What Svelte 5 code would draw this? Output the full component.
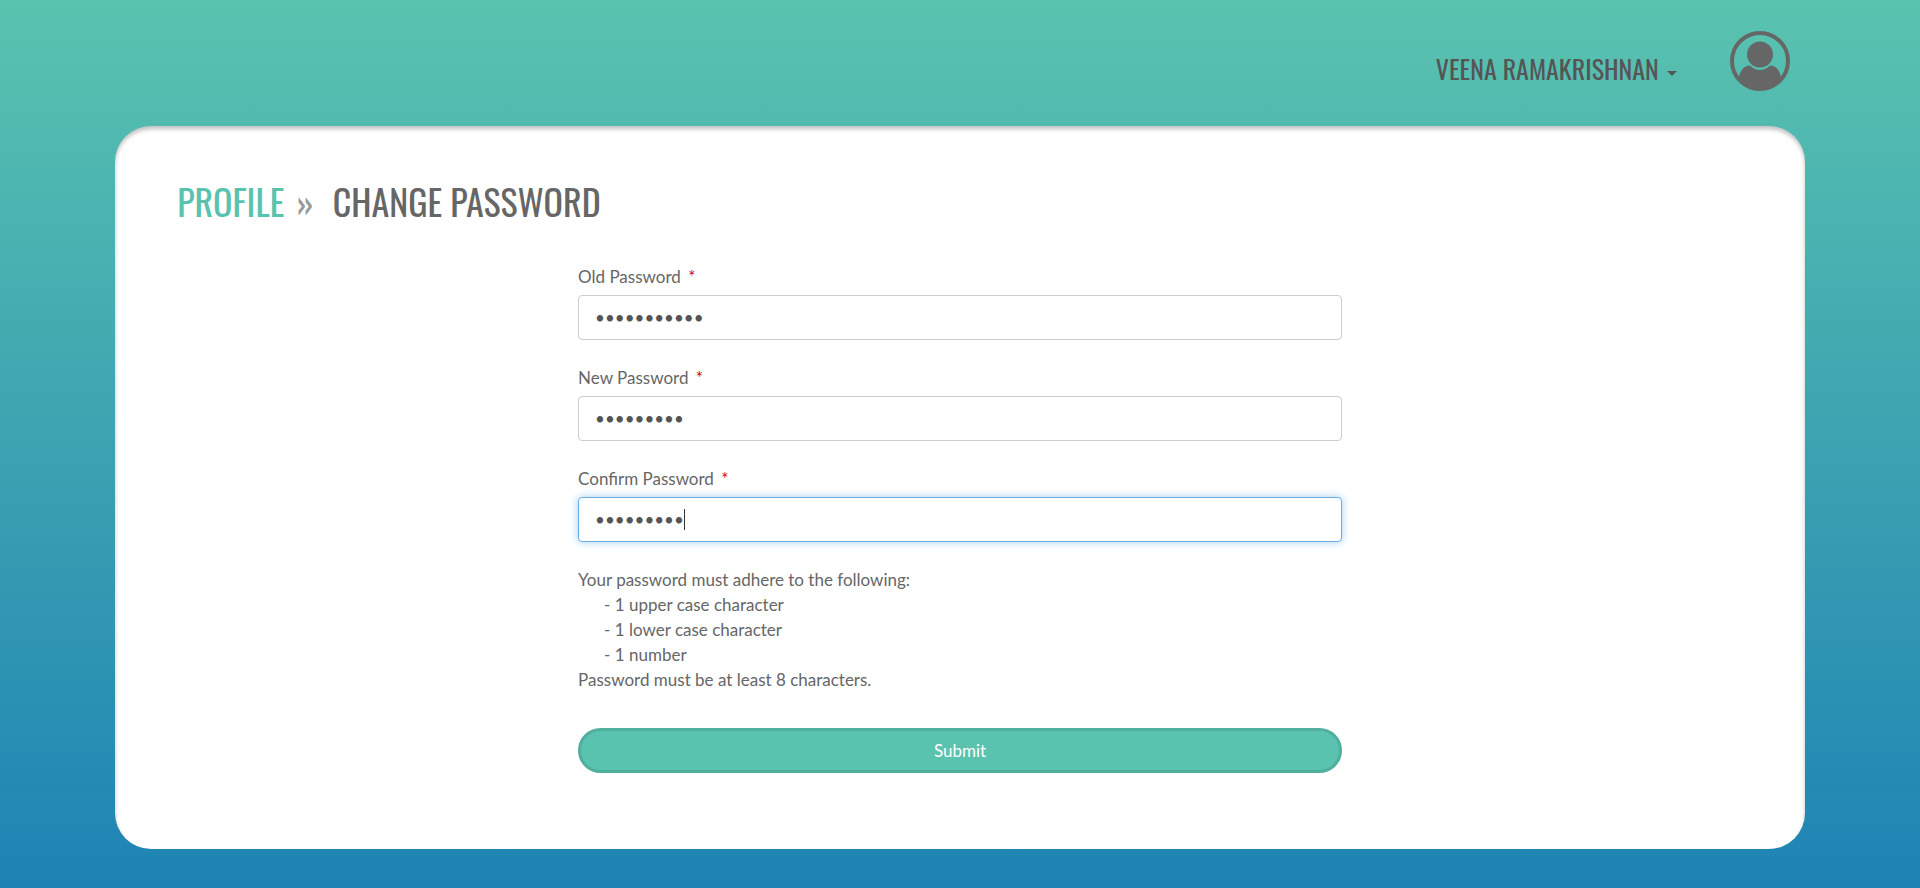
<script>
  import { onMount } from 'svelte';

  let oldPassword = $state('Evergreen12');
  let newPassword = $state('Meadow123');
  let confirmPassword = $state('Meadow123');
  let confirmFocused = $state(false);
  let confirmField;

  onMount(() => confirmField.focus());
</script>

<div class="page">
  <header>
    <button class="account" type="button">
      <span>VEENA RAMAKRISHNAN</span>
      <svg class="caret" viewBox="0 0 10 5" aria-hidden="true"><path d="M0 0h10L5 5z" /></svg>
    </button>
    <svg class="avatar" viewBox="0 0 60 60" aria-hidden="true">
      <circle cx="30" cy="30" r="28" fill="none" stroke="#666" stroke-width="4" />
      <circle cx="30" cy="23.500" r="13" />
      <path d="M9 47C9.500 40 14 34.500 20 34.500C23 37.300 26 39 30 39S37 37.300 40 34.500C46 34.500 50.500 40 51 47C46 54 38 58.500 30 58.500S14 54 9 47Z" />
    </svg>
  </header>

  <main>
    <h1>
      <a href="#profile">PROFILE</a>
      <span class="divider">»</span>
      <span>CHANGE PASSWORD</span>
    </h1>

    <form onsubmit={(event) => event.preventDefault()}>
      <div class="field">
        <label for="old-password">Old Password <span class="required">*</span></label>
        <input id="old-password" type="password" bind:value={oldPassword} />
      </div>
      <div class="field">
        <label for="new-password">New Password <span class="required">*</span></label>
        <input id="new-password" type="password" bind:value={newPassword} />
      </div>
      <div class="field">
        <label for="confirm-password">Confirm Password <span class="required">*</span></label>
        <div class="caret-box">
          <input
            id="confirm-password"
            class="custom-caret"
            type="password"
            bind:value={confirmPassword}
            bind:this={confirmField}
            onfocus={() => (confirmFocused = true)}
            onblur={() => (confirmFocused = false)}
          />
          {#if confirmFocused}
            <span class="text-caret" aria-hidden="true">{'•'.repeat(confirmPassword.length)}</span>
          {/if}
        </div>
      </div>

      <div class="rules">
        <p>Your password must adhere to the following:</p>
        <ul>
          <li>- 1 upper case character</li>
          <li>- 1 lower case character</li>
          <li>- 1 number</li>
        </ul>
        <p>Password must be at least 8 characters.</p>
      </div>

      <button class="submit" type="submit">Submit</button>
    </form>
  </main>
</div>

<style>
  :global(body) {
    margin: 0;
  }

  * {
    box-sizing: border-box;
  }

  .page {
    min-height: 100vh;
    padding: 0 6% 39px;
    background: linear-gradient(#5ac3af, #1e83b4);
    color: #666;
    font: 17px/25px Lato, sans-serif;
  }

  header {
    display: flex;
    justify-content: flex-end;
    align-items: flex-start;
    gap: 53px;
    height: 126px;
    padding: 31px 15px 0 0;
  }

  .account {
    display: flex;
    align-items: center;
    gap: 8px;
    margin-top: 18px;
    padding: 0;
    border: 0;
    background: none;
    color: #555;
    font: 26px/40px Oswald, "Liberation Sans Narrow", sans-serif;
    cursor: pointer;
  }

  .caret {
    width: 10px;
    height: 5px;
    margin-top: 8px;
    fill: #555;
  }

  .avatar {
    width: 60px;
    height: 60px;
    fill: #666;
  }

  main {
    padding: 47px 62px 76px;
    border-radius: 36px;
    background: #fff;
    box-shadow: inset 0 3px 4px rgba(0, 0, 0, 0.25);
  }

  h1 {
    display: flex;
    align-items: baseline;
    margin: 0 0 35px;
    font: 36px/56px Oswald, "Liberation Sans Narrow", sans-serif;
  }

  h1 a {
    color: #5ac3af;
    text-decoration: none;
  }

  .divider {
    margin: 0 19px 0 12px;
    color: #999;
  }

  form {
    width: calc(50% - 19px);
    margin: 0 auto;
  }

  .field {
    margin-bottom: 25px;
  }

  label {
    display: block;
    margin-bottom: 6px;
  }

  .required {
    margin-left: 3px;
    color: #d0021b;
  }

  input {
    display: block;
    width: 100%;
    height: 45px;
    padding: 6px 16px;
    border: 1px solid #ccc;
    border-radius: 4px;
    background: #fff;
    color: #555;
    font: 17px/25px Lato, sans-serif;
  }

  input:focus {
    border-color: #66afe9;
    outline: 0;
    box-shadow: 0 0 8px rgba(102, 175, 233, 0.6);
  }

  .caret-box {
    position: relative;
  }

  .custom-caret {
    caret-color: transparent;
  }

  .text-caret {
    position: absolute;
    top: 12px;
    left: 17px;
    border-right: 1px solid #333;
    color: transparent;
    line-height: 21px;
    pointer-events: none;
  }

  .rules {
    margin-bottom: 36px;
  }

  p,
  ul {
    margin: 0;
    padding: 0;
    list-style: none;
  }

  ul {
    padding-left: 26px;
  }

  .submit {
    display: block;
    width: 100%;
    height: 45px;
    border: 3px solid #51af9d;
    border-radius: 23px;
    background: #5ac3af;
    color: #fff;
    font: 17px/25px Lato, sans-serif;
    cursor: pointer;
  }
</style>
